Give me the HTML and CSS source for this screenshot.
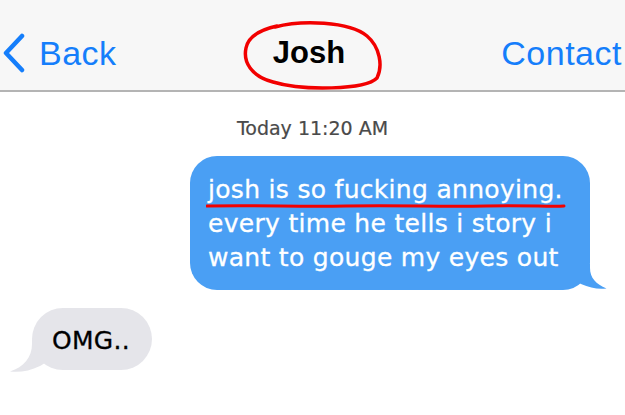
FILE: index.html
```html
<!DOCTYPE html>
<html>
<head>
    <title>Josh</title>
    <link rel="stylesheet" href="styles.css">
</head>
<body>
    <div class="navbar">
        <a class="nav-back">
            <svg class="chevron" width="26" height="40" viewBox="0 0 26 40">
                <path d="M21 3 L5 20 L21 37" fill="none" stroke="#157efb" stroke-width="4.5" stroke-linecap="round" stroke-linejoin="round"/>
            </svg>
            <span>Back</span>
        </a>
        <span class="nav-title">Josh</span>
        <a class="nav-contact">Contact</a>
        <!-- red marker circle drawn over the title -->
        <svg class="scribble-circle" width="146" height="72" viewBox="0 0 146 72">
            <path d="M34 7 C60 0 108 1 126 16 C139 27 142 46 136 58 C124 70 62 71 32 62 C10 56 2 42 5 28 C7 18 18 10 36 6" fill="none" stroke="#f20000" stroke-width="3.5" stroke-linecap="round"/>
        </svg>
    </div>

    <div class="thread">
        <div class="timestamp">Today 11:20 AM</div>

        <div class="row sent-row">
            <div class="bubble sent">
                josh is so fucking annoying.<br>
                every time he tells i story i<br>
                want to gouge my eyes out
                <svg class="tail tail-sent" width="34" height="26" viewBox="0 0 34 26">
                    <path d="M0 0 H17 V4 C17 14 23 20 33.5 24.5 C25 25.5 17 24 8 20 L0 14 Z" fill="#4a9ff4"/>
                </svg>
                <svg class="scribble-line" width="360" height="8" viewBox="0 0 360 8">
                    <path d="M1 4 C60 3 90 5 140 4 C200 3 230 5 280 4 C320 3 345 5 358 4" fill="none" stroke="#f20000" stroke-width="3" stroke-linecap="round"/>
                </svg>
            </div>
        </div>

        <div class="row received-row">
            <div class="bubble received">
                OMG..
                <svg class="tail tail-received" width="40" height="32" viewBox="0 0 40 32">
                    <path d="M40 0 H22 V4 C22 17 14 27 0 31.5 C10 32.5 20 31 30 26 L40 20 Z" fill="#e5e5ea"/>
                </svg>
            </div>
        </div>
    </div>
</body>
</html>
```

FILE: styles.css
```css
body {
    margin: 0;
    width: 625px;
    height: 415px;
    overflow: hidden;
    background: #fff;
    font-family: "DejaVu Sans", Verdana, sans-serif;
}
.navbar {
    position: relative;
    height: 74px;
    padding-top: 16px;
    display: flex;
    align-items: center;
    justify-content: space-between;
    background: #f7f7f7;
    border-bottom: 2px solid #b4b4b4;
    font-family: "Liberation Sans", Arial, sans-serif;
}
.nav-back {
    display: flex;
    align-items: center;
    color: #157efb;
    font-size: 34px;
    letter-spacing: 0.5px;
}
.chevron {
    margin-left: 1px;
    margin-right: 12px;
}
.nav-title {
    font-weight: bold;
    font-size: 31px;
    color: #000;
}
.nav-contact {
    color: #157efb;
    font-size: 34px;
    letter-spacing: 0.5px;
    margin-right: 3px;
}
.scribble-circle {
    position: absolute;
    left: 241px;
    top: 20px;
}
.thread {
    padding-top: 25px;
}
.timestamp {
    text-align: center;
    color: #4a4a4a;
    font-size: 19px;
    -webkit-text-stroke: 0.2px #4a4a4a;
}
.row {
    display: flex;
}
.sent-row {
    justify-content: flex-end;
    margin-top: 17px;
    padding-right: 35px;
}
.received-row {
    margin-top: 18px;
    padding-left: 32px;
}
.bubble {
    position: relative;
    font-size: 25px;
    line-height: 34px;
    letter-spacing: 0.3px;
    -webkit-text-stroke: 0.3px currentColor;
}
.sent {
    width: 382px;
    padding: 17px 0 15px 18px;
    background: #4a9ff4;
    color: #fff;
    border-radius: 27px;
}
.received {
    width: 100px;
    padding: 16px 0 12px 20px;
    background: #e5e5ea;
    color: #000;
    border-radius: 31px;
}
.tail {
    position: absolute;
    bottom: 0;
}
.tail-sent {
    right: -17px;
}
.tail-received {
    left: -22px;
    bottom: -2px;
}
.scribble-line {
    position: absolute;
    left: 16px;
    top: 46px;
}
```
